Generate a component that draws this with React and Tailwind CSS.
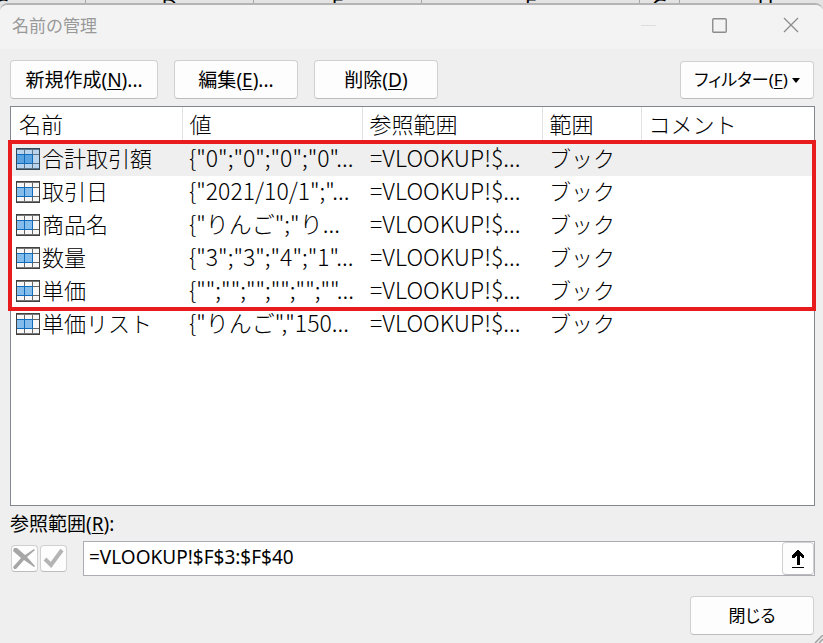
import React, { useState } from 'react';
import clsx from 'clsx';

const names = [
  { name: '合計取引額', value: '{"0";"0";"0";"0"...' },
  { name: '取引日', value: '{"2021/10/1";"...' },
  { name: '商品名', value: '{"りんご";"り...' },
  { name: '数量', value: '{"3";"3";"4";"1"...' },
  { name: '単価', value: '{"";"";"";"";"";""...' },
  { name: '単価リスト', value: '{"りんご","150...' },
];

const columns = [
  { label: '名前', width: 'w-[171px]' },
  { label: '値', width: 'w-[180px]' },
  { label: '参照範囲', width: 'w-[180px]' },
  { label: '範囲', width: 'w-[99px]' },
  { label: 'コメント', width: '' },
];

const sheetColumns = [
  { letter: 'C', width: 'w-[168px]' },
  { letter: 'D', width: 'w-[168px]' },
  { letter: 'E', width: 'w-[168px]' },
  { letter: 'F', width: 'w-[218px]' },
  { letter: 'G', width: 'w-[40px]' },
  { letter: 'H', width: 'w-[172px]' },
];

const RangeIcon = ({ selected }) => (
  <svg className="mt-0.5 shrink-0" width="24" height="22" viewBox="0 0 24 22" shapeRendering="crispEdges">
    <rect width="24" height="22" fill={selected ? '#b9d4ee' : '#f7f7f7'} />
    <rect x="1" y="7" width="15" height="8" fill={selected ? '#5ba3e0' : '#84bdec'} />
    <path
      d="M8.5 1v20M16.5 1v20M1 6.5h22M1 15.5h22"
      stroke={selected ? '#5f7486' : '#666666'}
      fill="none"
    />
    <path d="M1 6.5h15.5v9H1M8.5 7v8" stroke="#0f6cbd" fill="none" />
    <path d="M0 1.5h24M0 20.5h24" stroke={selected ? '#5f7486' : '#777777'} fill="none" />
    <rect x="0.5" y="0.5" width="23" height="21" stroke={selected ? '#34485a' : '#404040'} fill="none" />
  </svg>
);

const Button = ({ className, children, ...props }) => (
  <button
    type="button"
    className={clsx(
      'flex items-center justify-center rounded border border-[#d0d0d0] border-b-[#bcbcbc] bg-[#fdfdfd] whitespace-nowrap',
      className
    )}
    {...props}
  >
    {children}
  </button>
);

const Key = ({ children }) => (
  <span>
    (<span className="underline underline-offset-2">{children}</span>)
  </span>
);

const SheetHeader = () => (
  <div className="flex h-1 overflow-hidden bg-[#e3e3e3] font-['Open_Sans','Noto_Sans',sans-serif]">
    {sheetColumns.map((col) => (
      <div
        key={col.letter}
        className={clsx(
          '-mt-1.5 h-6 shrink-0 border-r border-[#a8a8a8] text-center text-[22px] leading-6 first:-ml-[82px]',
          col.width
        )}
      >
        {col.letter}
      </div>
    ))}
  </div>
);

const TitleBar = () => (
  <header className="flex h-11 items-start justify-between bg-[#f3f3f3] pl-3 pr-6 text-[#999999]">
    <h1 className="mt-2 text-[17px] leading-6">名前の管理</h1>
    <div className="mt-3 flex items-center gap-14">
      <button type="button" aria-label="最小化" disabled>
        <svg width="15" height="16" viewBox="0 0 15 16">
          <path d="M0 8.5h15" stroke="#dddddd" />
        </svg>
      </button>
      <button type="button" aria-label="最大化">
        <svg width="15" height="16" viewBox="0 0 15 16" fill="none">
          <rect x="0.75" y="1.75" width="13.5" height="13.5" rx="1" stroke="#8c8c8c" strokeWidth="1.4" />
        </svg>
      </button>
      <button type="button" aria-label="閉じる">
        <svg width="16" height="16" viewBox="0 0 16 16" fill="none">
          <path d="M1 1l14 14M15 1L1 15" stroke="#8c8c8c" strokeWidth="1.3" />
        </svg>
      </button>
    </div>
  </header>
);

const NameTable = ({ selected, onSelect }) => (
  <div className="relative h-[400px] border border-[#828790] bg-white">
    <table className="w-full table-fixed border-collapse text-left text-[22px] font-light leading-7 font-['Open_Sans','Noto_Sans_CJK_JP',sans-serif]">
      <thead>
        <tr className="h-9">
          {columns.map((col) => (
            <th
              key={col.label}
              scope="col"
              className={clsx(
                'border-r border-[#e2e2e2] p-0 pb-[3px] pl-[7px] font-light whitespace-nowrap first:pl-2 last:border-r-0',
                col.width
              )}
            >
              {col.label}
            </th>
          ))}
        </tr>
      </thead>
      <tbody>
        {names.map((row) => (
          <tr
            key={row.name}
            onClick={() => onSelect(row.name)}
            className={clsx('h-[33px] whitespace-nowrap', row.name === selected && 'bg-[#efefef]')}
          >
            <td className="p-0 pb-1 pl-[5px]">
              <div className="flex items-center gap-0.5">
                <RangeIcon selected={row.name === selected} />
                {row.name}
              </div>
            </td>
            <td className="p-0 pb-[5px] pl-[7px] text-[23px] leading-7 font-['Noto_Sans_CJK_JP',sans-serif]">{row.value}</td>
            <td className="p-0 pb-[5px] pl-2 text-[23px] leading-7 font-['Noto_Sans_CJK_JP',sans-serif]">=VLOOKUP!$...</td>
            <td className="p-0 pb-1 pl-[7px]">ブック</td>
            <td className="p-0" />
          </tr>
        ))}
      </tbody>
    </table>
    {/* highlight around the first five names */}
    <div className="pointer-events-none absolute -left-[3px] -right-0.5 top-[33px] h-[171px] border-4 border-[#e81c1c]" />
  </div>
);

const App = () => {
  const [selected, setSelected] = useState('合計取引額');
  const [range, setRange] = useState('=VLOOKUP!$F$3:$F$40');

  return (
    <div className="min-h-screen overflow-hidden bg-[#e3e3e3] font-['Noto_Sans_CJK_JP',sans-serif] text-black">
      <SheetHeader />
      <main className="relative -mt-px min-h-[calc(100vh-3px)] overflow-hidden rounded-t-lg border-t-2 border-[#b4b4b4] bg-[#efefef] pb-2">
        <TitleBar />
        <div className="pl-[10px] pr-2">
          <div className="flex items-end gap-4 pt-[11px] pr-px text-[19px] font-['Noto_Sans','Noto_Sans_CJK_JP',sans-serif]">
            <Button className="h-[39px] w-[148px] border-[#b4c8d8] pt-0.5">
              新規作成<Key>N</Key>...
            </Button>
            <Button className="h-[39px] w-[124px] pt-0.5">
              編集<Key>E</Key>...
            </Button>
            <Button className="h-[39px] w-[124px] pt-0.5">
              削除<Key>D</Key>
            </Button>
            <Button className="ml-auto h-[38px] w-[134px] gap-1 text-[17px] [font-feature-settings:'palt']">
              <span>フィルター<Key>F</Key></span>
              <svg width="8" height="5" viewBox="0 0 8 5">
                <path d="M0 0h8L4 5z" />
              </svg>
            </Button>
          </div>
          <div className="mt-[7px]">
            <NameTable selected={selected} onSelect={setSelected} />
          </div>
          <div className="font-['Noto_Sans','Noto_Sans_CJK_JP',sans-serif] text-[19px]">
            <label htmlFor="range" className="mt-1.5 block leading-6">
              参照範囲<Key>R</Key>:
            </label>
            <div className="mt-[5px] flex items-center pl-px">
              <Button aria-label="取り消し" className="h-[27px] w-[27px]">
                <svg width="23" height="21" viewBox="0 0 23 21" fill="#a6a6a6">
                  <path d="M1 0l3 0 8 7 9-6 1 1-8 7 8 9-1 1-10-7-8 9-2 0-1-2 8-9-8-7z" />
                </svg>
              </Button>
              <Button aria-label="入力" className="ml-0.5 h-[27px] w-[27px]">
                <svg width="21" height="21" viewBox="0 0 21 21" fill="none">
                  <path d="M2 11l6 6L19 2" stroke="#b4b4b4" strokeWidth="4" />
                </svg>
              </Button>
              <div className="ml-4 flex h-[35px] flex-1 border border-[#abadb3] bg-white">
                <input
                  id="range"
                  type="text"
                  value={range}
                  onChange={(e) => setRange(e.target.value)}
                  className="min-w-0 flex-1 bg-transparent pb-0.5 pl-[5px] outline-none"
                />
                <Button aria-label="範囲を選択" className="w-8">
                  <svg width="14" height="18" viewBox="0 0 14 18" shapeRendering="crispEdges">
                    <path d="M6 0h2v1h1v1h1v1h1v1h1v1h1v3h-2V7h-1V6H9v9H6V6H5v1H4v1H1V5h1V4h1V3h1V2h1V1h1z" />
                    <path d="M1 17h12v1H1z" />
                  </svg>
                </Button>
              </div>
            </div>
            <div className="mt-5 flex justify-end pr-px">
              <Button className="h-[39px] w-[124px] border-[#b4c8d8] text-[17px] [font-feature-settings:'palt']">閉じる</Button>
            </div>
          </div>
        </div>
        <svg className="absolute bottom-0 right-0" width="10" height="8" viewBox="0 0 10 8">
          <path d="M2 8l8-8M6 8l4-4" stroke="#a0a0a0" strokeWidth="1.5" />
        </svg>
      </main>
    </div>
  );
};

export default App;
